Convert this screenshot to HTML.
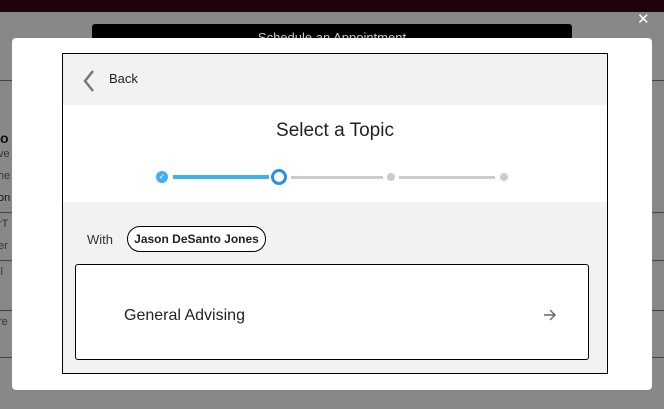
<!DOCTYPE html>
<html><head><style>
body{margin:0;width:664px;height:409px;background:#888;position:relative;overflow:hidden;font-family:"Liberation Sans",sans-serif}
.a{position:absolute}
</style></head><body>
<div class="a" style="left:0;top:0;width:664px;height:12px;background:#1f0308"></div>
<div class="a" style="left:0;top:80px;width:664px;height:1px;background:#444"></div>
<div class="a" style="left:0;top:212px;width:664px;height:1px;background:#444"></div>
<div class="a" style="left:0;top:260px;width:664px;height:1px;background:#444"></div>
<div class="a" style="left:0;top:310px;width:664px;height:1px;background:#444"></div>
<div class="a" style="left:0;top:357px;width:664px;height:1px;background:#444"></div>
<div class="a" style="left:0;top:130px;font-size:14px;font-weight:bold;color:#111">o</div>
<div class="a" style="left:-2px;top:148px;font-size:11px;color:#333">ve</div>
<div class="a" style="left:-2px;top:170px;font-size:11px;color:#333">ne</div>
<div class="a" style="left:-2px;top:192px;font-size:11px;color:#111">on</div>
<div class="a" style="left:-2px;top:218px;font-size:11px;color:#333">rT</div>
<div class="a" style="left:-2px;top:240px;font-size:11px;color:#333">er</div>
<div class="a" style="left:-2px;top:266px;font-size:11px;color:#333">il</div>
<div class="a" style="left:-2px;top:316px;font-size:11px;color:#333">re</div>
<div class="a" style="left:92px;top:24px;width:480px;height:20px;background:#000;border-radius:3px;color:#ccc;font-size:13px;text-align:center;line-height:28px">Schedule an Appointment</div>
<div class="a" style="left:637px;top:10px;color:#fff;font-size:15px">✕</div>
<div class="a" style="left:12px;top:38px;width:640px;height:352px;background:#fff;border-radius:4px"></div>
<div class="a" style="left:62px;top:53px;width:544px;height:319px;border:1px solid #000;background:#f2f2f2">
 <div class="a" style="left:0;top:51px;width:544px;height:97px;background:#fff"></div>
 <svg class="a" style="left:18px;top:15px" width="16" height="24"><path d="M12 2 L4 12 L12 22" fill="none" stroke="#777" stroke-width="2.5"/></svg>
 <div class="a" style="left:46px;top:17px;font-size:13px;color:#222">Back</div>
 <div class="a" style="left:0;top:66px;width:544px;text-align:center;font-size:19px;color:#222">Select a Topic</div>
 <div class="a" style="left:110px;top:121px;width:96px;height:4px;background:#42b0ef"></div>
 <div class="a" style="left:228px;top:122px;width:92px;height:3px;background:#ccc"></div>
 <div class="a" style="left:336px;top:122px;width:96px;height:3px;background:#ccc"></div>
 <div class="a" style="left:93px;top:117px;width:12px;height:12px;border-radius:50%;background:#42b0ef;color:#fff;font-size:8px;text-align:center;line-height:12px">✓</div>
 <div class="a" style="left:208px;top:115px;width:10px;height:10px;border-radius:50%;border:3px solid #2b8fe6;background:#fff"></div>
 <div class="a" style="left:324px;top:119px;width:8px;height:8px;border-radius:50%;background:#ccc"></div>
 <div class="a" style="left:437px;top:119px;width:8px;height:8px;border-radius:50%;background:#ccc"></div>
 <div class="a" style="left:24px;top:178px;font-size:13px;color:#333">With</div>
 <div class="a" style="left:64px;top:172px;width:137px;height:24px;border:1px solid #000;border-radius:13px;background:#fff;font-size:12px;font-weight:bold;text-align:center;line-height:24px;color:#222">Jason DeSanto Jones</div>
 <div class="a" style="left:12px;top:210px;width:512px;height:94px;border:1px solid #000;border-radius:3px;background:#fff">
  <div class="a" style="left:48px;top:42px;font-size:16px;color:#222">General Advising</div>
  <svg class="a" style="left:467px;top:44px" width="14" height="12"><path d="M1 6 H12 M7 1 L12 6 L7 11" fill="none" stroke="#666" stroke-width="1.4"/></svg>
 </div>
</div>
</body></html>
